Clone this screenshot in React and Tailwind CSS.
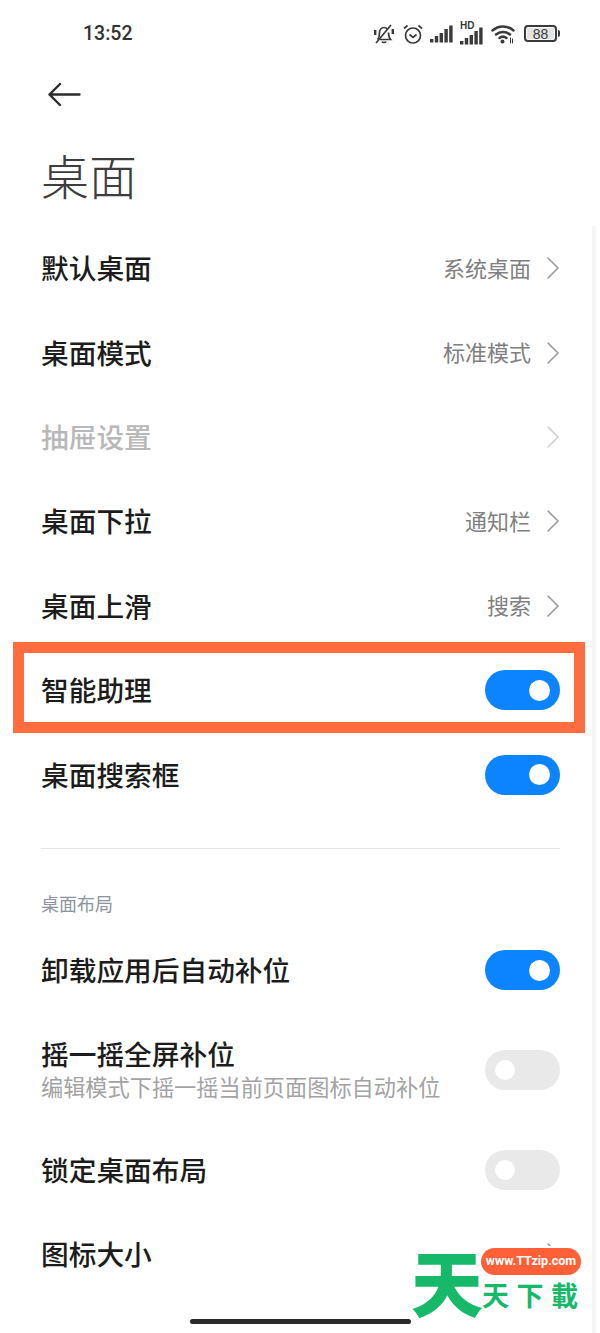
import React from "react";

const cjk = "font-['Noto_Sans_CJK_SC','Noto_Sans',sans-serif]";

function Chevron({ className = "text-[#9a9a9a]" }) {
    return (
        <svg width="14" height="24" viewBox="0 0 14 24" fill="none" className={className}>
            <path d="M2 2l10 10L2 22" stroke="currentColor" strokeWidth="1.6" strokeLinecap="round" strokeLinejoin="round" />
        </svg>
    );
}

function Toggle({ on }) {
    if (on) {
        return (
            <div className="flex h-[40px] w-[75px] items-center justify-end rounded-full bg-[#0d84ff] pr-[10px]">
                <div className="h-[21px] w-[21px] rounded-full bg-white" />
            </div>
        );
    }
    return (
        <div className="flex h-[40px] w-[75px] items-center rounded-full bg-[#e9e9e9] pl-[10px]">
            <div className="h-[20px] w-[20px] rounded-full bg-white" />
        </div>
    );
}

function Row({ title, value, sub, toggle, chevron, disabled, tall }) {
    return (
        <div className={`flex items-center justify-between ${tall ? "h-[115px]" : "h-[84.4px]"}`}>
            <div className={`flex flex-col ${sub ? "pb-[4px]" : "pb-[2px]"}`}>
                <div className={`text-[27.700px] leading-[34px] font-medium ${disabled ? "text-[#b8b8b8]" : "text-[#1c1c1c]"}`}>{title}</div>
                {sub && <div className="mt-[2px] text-[22.200px] leading-[28px] text-[#a3a3a3]">{sub}</div>}
            </div>
            {toggle !== undefined && <Toggle on={toggle} />}
            {chevron && (
                <div className="flex items-center gap-[15px]">
                    {value && <span className="pb-[2px] text-[22px] text-[#808080]">{value}</span>}
                    <Chevron className={disabled ? "text-[#cfcfcf]" : "text-[#9a9a9a]"} />
                </div>
            )}
        </div>
    );
}

function SignalBars({ className }) {
    return (
        <svg width="23" height="18" viewBox="0 0 23 18" fill="currentColor" className={className}>
            <rect x="0" y="14" width="3.400" height="3.500" />
            <rect x="4.800" y="11" width="3.400" height="6.500" />
            <rect x="9.600" y="8" width="3.400" height="9.500" />
            <rect x="14.400" y="4" width="3.400" height="13.500" />
            <rect x="19.200" y="0.500" width="3.400" height="17" />
        </svg>
    );
}

function StatusIcons() {
    return (
        <div className="flex items-center text-[#3a3a3a]">
            {/* muted bell */}
            <svg width="20" height="22" viewBox="0 0 20 22" fill="none" stroke="currentColor" strokeWidth="1.700">
                <path d="M3.500 16.500c1.500-1.500 2-3 2-6.500 0-3 1.800-5.500 4.500-5.500 1.500 0 2.600.6 3.400 1.700M14.500 9.500c.1 3.500.6 5.500 2 7H6" />
                <path d="M8 18.500c.5 1.300 3.500 1.300 4 0" />
                <path d="M2 20L17 2" />
                <path d="M1 7v5M19 6v5" strokeWidth="2.800" />
            </svg>
            {/* alarm clock */}
            <svg width="20" height="22" viewBox="0 0 20 22" fill="none" stroke="currentColor" strokeWidth="1.700" className="ml-[9px]">
                <circle cx="10" cy="12.500" r="7.500" />
                <path d="M6.500 11.500l3.500 3 3.500-3" />
                <path d="M1 5.500L4.500 2.500M19 5.500L15.500 2.500" />
            </svg>
            <SignalBars className="ml-[7px]" />
            {/* signal with HD tag */}
            <div className="relative ml-[7px] h-[22px] w-[23px]">
                <span className="absolute left-0 top-[-3px] font-['Liberation_Sans',sans-serif] text-[10px] leading-[11px] font-bold">HD</span>
                <SignalBars className="absolute left-0 top-[4px]" />
            </div>
            {/* wifi */}
            <svg width="24" height="20" viewBox="0 0 24 20" fill="none" stroke="currentColor" strokeWidth="2.500" className="ml-[8px]" strokeLinecap="round">
                <path d="M1.500 6.500c6-5.500 15-5.500 21 0" />
                <path d="M5 10.500c4-3.500 10-3.500 14 0" />
                <path d="M8.500 14c2-1.600 5-1.600 7 0" />
                <circle cx="11.500" cy="17.500" r="2" fill="currentColor" stroke="none" />
                <path d="M19.500 14v5M21.500 15v4" strokeWidth="1" />
            </svg>
            {/* battery */}
            <div className="ml-[9px] flex items-center">
                <div className="flex h-[17px] w-[33px] items-center justify-center rounded-[4px] border-2 border-[#3a3a3a] p-[1px]">
                    <div className="flex h-full w-full items-center justify-center bg-[#e4e4e4] font-['Liberation_Sans',sans-serif] text-[14px] leading-none">88</div>
                </div>
                <div className="ml-[1px] h-[7px] w-[2px] rounded-r-sm bg-[#3a3a3a]" />
            </div>
        </div>
    );
}

export default function App() {
    return (
        <div className={`relative h-[1333px] w-[600px] overflow-hidden bg-white ${cjk}`}>
            {/* status bar */}
            <div className="flex h-[67px] items-center justify-between pl-[83px] pr-[40px]">
                <span className="pt-[1px] font-['Roboto',sans-serif] text-[19.500px] font-medium text-[#333333]">13:52</span>
                <StatusIcons />
            </div>

            {/* back arrow */}
            <div className="pl-[48px] pt-[15px]">
                <svg width="33" height="25" viewBox="0 0 33 25" fill="none" stroke="#2b2b2b" strokeWidth="2.400" strokeLinecap="round" strokeLinejoin="round">
                    <path d="M1.500 12.500H31.500M12 2L1.500 12.500 12 23" />
                </svg>
            </div>

            <h1 className="pl-[41px] pt-[33px] text-[48px] leading-[68px] font-light text-[#3d3d3d]">桌面</h1>

            {/* settings list */}
            <div className="pl-[41px] pr-[40px] pt-[18px]">
                <Row title="默认桌面" value="系统桌面" chevron />
                <Row title="桌面模式" value="标准模式" chevron />
                <Row title="抽屉设置" chevron disabled />
                <Row title="桌面下拉" value="通知栏" chevron />
                <Row title="桌面上滑" value="搜索" chevron />
                <Row title="智能助理" toggle={true} />
                <Row title="桌面搜索框" toggle={true} />

                <div className="mt-[31px] h-px bg-[#e6e6e6]" />
                <div className="pt-[42px] text-[18px] leading-[24px] text-[#8d93a0]">桌面布局</div>
                <div className="mt-[13.500px]">
                    <Row title="卸载应用后自动补位" toggle={true} />
                    <Row title="摇一摇全屏补位" sub="编辑模式下摇一摇当前页面图标自动补位" toggle={false} tall />
                    <Row title="锁定桌面布局" toggle={false} />
                    <Row title="图标大小" chevron />
                </div>
            </div>

            {/* scroll track */}
            <div className="absolute right-[4px] top-[226px] h-[1107px] w-[4px] bg-[#f6f6f6]" />

            {/* highlight frame */}
            <div className="absolute left-[13px] top-[642px] h-[91px] w-[572px] border-[11px] border-[#ff6c3f]" />

            {/* site watermark */}
            <div className="absolute left-[408px] top-[1246px] h-[68px] w-[178px] bg-white">
                <div className="absolute left-[3px] top-[-16px] text-[72px] leading-[100px] font-black text-[#16b96a]">天</div>
                <div className="absolute left-[73px] top-[2px] flex h-[27px] w-[100px] items-center justify-center rounded-full bg-[#ff6037] font-['Roboto',sans-serif] text-[12.500px] font-bold text-white">www.TTzip.com</div>
                <div className="absolute left-[74px] top-[32px] flex w-[96px] justify-between text-[27px] leading-[34px] font-bold text-[#16b96a]">
                    <span>天</span>
                    <span>下</span>
                    <span>載</span>
                </div>
            </div>

            {/* home indicator */}
            <div className="absolute bottom-[9px] left-[190px] h-[5px] w-[221px] rounded-full bg-[#2b2b2b]" />
        </div>
    );
}
